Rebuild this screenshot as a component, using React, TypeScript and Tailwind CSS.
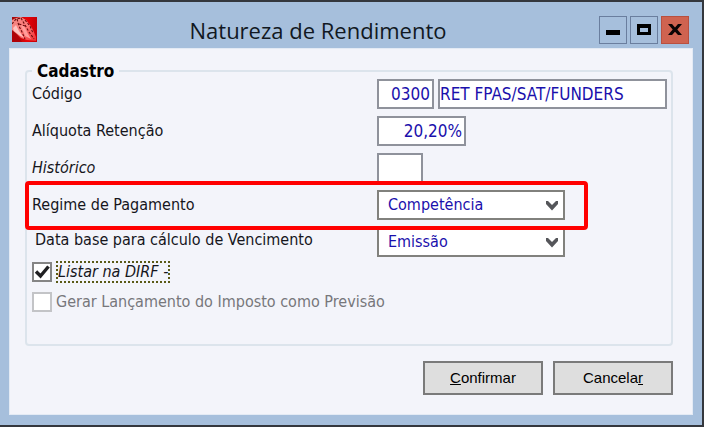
import { useState } from "react";
import type { ReactNode } from "react";

const fieldClass =
  "h-[30px] rounded-none border-2 border-[#8f929b] bg-white text-[17px] text-[#1a10ac] outline-none";

function AppIcon() {
  return (
    <svg viewBox="0 0 25 25" className="h-[25px] w-[25px]" aria-hidden="true">
      <defs>
        <linearGradient id="iconBg" x1="0" y1="0" x2="1" y2="0">
          <stop offset="0" stopColor="#9c0a0c" />
          <stop offset="0.6" stopColor="#e80208" />
          <stop offset="1" stopColor="#c40006" />
        </linearGradient>
        <linearGradient id="iconWing" x1="0" y1="0" x2="1" y2="1">
          <stop offset="0" stopColor="#f08a86" />
          <stop offset="0.5" stopColor="#ff7b79" />
          <stop offset="1" stopColor="#f22a2c" />
        </linearGradient>
      </defs>
      <rect width="25" height="25" fill="url(#iconBg)" />
      <path d="M0 3L4 1L9 0L14 3L18 8L21 13L24 20L24 24L15 23L9 21L5 17L0 13Z" fill="url(#iconWing)" />
      <path d="M1 11L4 8L7 14L12 21L7 18L2 14Z" fill="#ffc3c0" />
      <path d="M9 8L12 9L16 17L19 22L13 19Z" fill="#ff9d9a" />
      <g fill="none" stroke="#6a0d0e" strokeWidth="1.1" strokeDasharray="2.5 1.5">
        <path d="M0 7L4 2L9 1" />
        <path d="M5 2L7 9L10 15L13 22" />
        <path d="M9 1L13 8L17 15L22 22" />
        <path d="M13 3L18 9L21 16" />
        <path d="M7 7L13 9" />
      </g>
      <path d="M0 15L4 18L8 22L10 25H0Z" fill="#b00208" />
    </svg>
  );
}

function Row({ label, htmlFor, className = "", highlight = false, children }: {
  label: string;
  htmlFor: string;
  className?: string;
  highlight?: boolean;
  children: ReactNode;
}) {
  return (
    <div className="relative flex h-[30px] items-center">
      <label htmlFor={htmlFor} className={`w-[345px] shrink-0 text-base leading-5 text-[#16161c] ${className}`}>
        {label}
      </label>
      {children}
      {highlight && (
        <div className="pointer-events-none absolute -top-[9px] -bottom-[10px] -left-[7px] z-10 w-[563px] rounded-sm border-4 border-[#ff0000]" />
      )}
    </div>
  );
}

function Dropdown({ id, options }: { id: string; options: string[] }) {
  return (
    <div className="relative w-[188px]">
      <select id={id} className="block h-[30px] w-full appearance-none rounded-none border-2 border-[#81817d] bg-white pl-[9px] text-base text-[#1a10ac] outline-none">
        {options.map((option) => (
          <option key={option}>{option}</option>
        ))}
      </select>
      <svg viewBox="0 0 12 10" className="pointer-events-none absolute top-[11px] right-[7px] h-[10px] w-3" aria-hidden="true">
        <path d="M0 0H2L6 4L10 0H12V3L6 9.5L0 3Z" fill="#55565a" />
      </svg>
    </div>
  );
}

function CheckRow({ id, checked, onChange, disabled = false, children }: {
  id: string;
  checked: boolean;
  onChange: (value: boolean) => void;
  disabled?: boolean;
  children: ReactNode;
}) {
  return (
    <div className="flex h-[30px] items-center gap-1">
      <span className="relative h-5 w-5 shrink-0">
        <input
          id={id}
          type="checkbox"
          checked={checked}
          disabled={disabled}
          onChange={(e) => onChange(e.target.checked)}
          className="block h-5 w-5 appearance-none border-2 border-[#858585] bg-white disabled:border-[#c3c4c7]"
        />
        {checked && (
          <svg viewBox="0 0 20 20" className="pointer-events-none absolute inset-0" aria-hidden="true">
            <path d="M4 9.5L8.5 14L16.5 4.5" fill="none" stroke="#202022" strokeWidth="3.4" />
          </svg>
        )}
      </span>
      {children}
    </div>
  );
}

export default function App() {
  const [dirf, setDirf] = useState(true);
  const [forecast, setForecast] = useState(false);

  return (
    <div className="flex min-h-screen flex-col border-t-2 border-r-2 border-b-2 border-[#34373d] bg-[#a6bfdc] px-[9px] pb-[10px] font-['DejaVu_Sans_Condensed','DejaVu_Sans',sans-serif]">
      <header className="flex h-[46px] items-center pt-[10px] pr-[4px] pb-px pl-[3px]">
        <AppIcon />
        <h1 className="flex-1 text-center font-['Open_Sans',sans-serif] text-[22px] leading-7 text-[#111822]">
          Natureza de Rendimento
        </h1>
        <div className="flex gap-[3px]">
          <button aria-label="Minimizar" className="flex h-7 w-7 items-center justify-center border border-[#6a7e9e]">
            <svg viewBox="0 0 14 14" className="h-[14px] w-[14px]">
              <rect y="7" width="14" height="5" fill="#000" />
            </svg>
          </button>
          <button aria-label="Maximizar" className="flex h-7 w-7 items-center justify-center border border-[#6a7e9e]">
            <svg viewBox="0 0 14 14" className="h-[14px] w-[14px]">
              <path d="M0 1H14V12H0ZM3 5V9H11V5Z" fill="#000" fillRule="evenodd" />
            </svg>
          </button>
          <button aria-label="Fechar" className="flex h-7 w-7 items-center justify-center border border-[#b9503f] bg-[#cf6350]">
            <svg viewBox="0 0 14 14" className="h-[14px] w-[14px]">
              <path d="M0 1H4L7 4.5L10 1H14L9.3 6.5L14 12H10L7 8.7L4 12H0L4.7 6.5Z" fill="#0a0404" />
            </svg>
          </button>
        </div>
      </header>

      <main className="flex-1 border border-[#e3eaf4] bg-[#f3f4fa] pt-[14px] pr-[19px] pb-[19px] pl-[15px]">
        <form onSubmit={(e) => e.preventDefault()}>
          <fieldset className="rounded border-2 border-[#dce4ec] pr-1 pb-[27px] pl-[5px]">
            <legend className="px-[5px] text-[17px] leading-4 font-bold text-black">Cadastro</legend>
            <div className="flex flex-col gap-[7px]">
              <Row label="Código" htmlFor="codigo">
                <input id="codigo" defaultValue="0300" className={`${fieldClass} w-[57px] pr-[2px] text-right`} />
                <input
                  aria-label="Descrição"
                  defaultValue="RET FPAS/SAT/FUNDERS"
                  className={`${fieldClass} ml-1 min-w-0 flex-1`}
                />
              </Row>
              <Row label="Alíquota Retenção" htmlFor="aliquota">
                <input id="aliquota" defaultValue="20,20%" className={`${fieldClass} w-[89px] pr-[2px] text-right`} />
              </Row>
              <Row label="Histórico" htmlFor="historico" className="italic">
                <input id="historico" className={`${fieldClass} w-[46px]`} />
              </Row>
              <Row label="Regime de Pagamento" htmlFor="regime" highlight>
                <Dropdown id="regime" options={["Competência", "Caixa"]} />
              </Row>
              <Row label="Data base para cálculo de Vencimento" htmlFor="database" className="pb-1 pl-[3px]">
                <Dropdown id="database" options={["Emissão", "Vencimento"]} />
              </Row>
            </div>
            <CheckRow id="dirf" checked={dirf} onChange={setDirf}>
              <label htmlFor="dirf" className="border-2 border-dotted border-[#5b5a16] text-base leading-[18px] text-[#16161c] italic">
                Listar na DIRF -
              </label>
            </CheckRow>
            <CheckRow id="previsao" checked={forecast} onChange={setForecast} disabled>
              <label htmlFor="previsao" className="text-base leading-5 text-[#77777b]">
                Gerar Lançamento do Imposto como Previsão
              </label>
            </CheckRow>
          </fieldset>

          <div className="mt-[15px] flex justify-end gap-[10px] font-['Liberation_Sans',Arial,sans-serif] text-[15px] text-black">
            <button type="submit" className="h-[34px] w-[120px] border-2 border-[#7a7a7a] bg-[#dedede]">
              <u>C</u>onfirmar
            </button>
            <button type="button" className="h-[34px] w-[120px] border-2 border-[#7a7a7a] bg-[#dedede]">
              Cancela<u>r</u>
            </button>
          </div>
        </form>
      </main>
    </div>
  );
}
